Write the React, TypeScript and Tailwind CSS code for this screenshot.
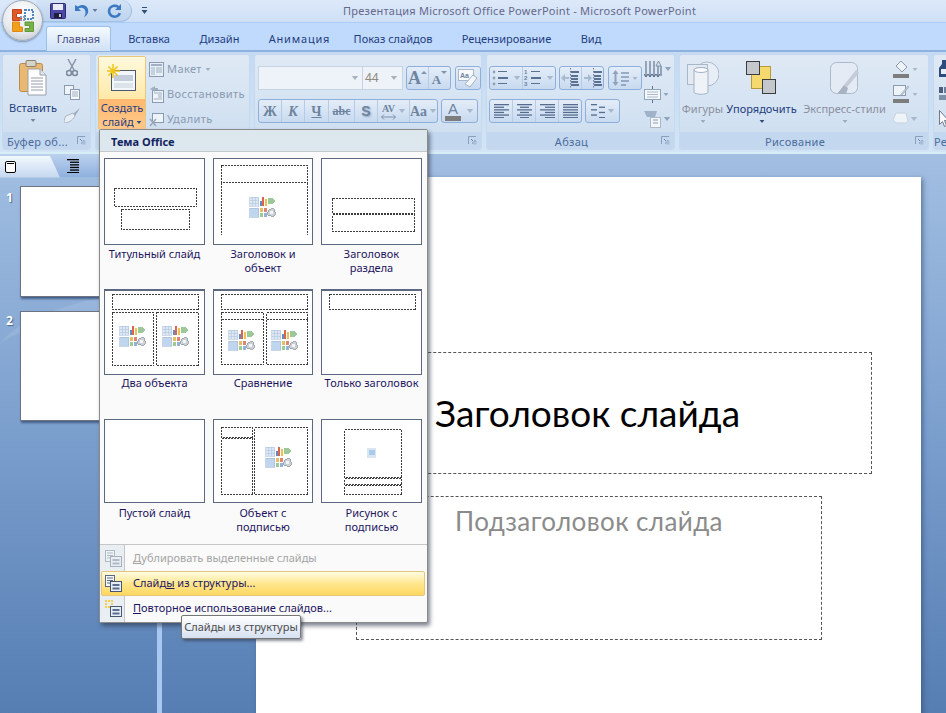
import React from "react";

const Caret = ({ c = "#7f93ad", s = 5 }: { c?: string; s?: number }) => (
  <svg width={s * 2} height={s} viewBox="0 0 10 5" className="shrink-0">
    <path d="M1 0h8L5 5z" fill={c} />
  </svg>
);

const Launcher = () => (
  <svg width="9" height="9" viewBox="0 0 9 9">
    <path d="M0.5 8V0.5H8" fill="none" stroke="#8aa0ba" />
    <path d="M3 3l4 4M7 4v3H4" fill="none" stroke="#6a87ab" />
    <rect x="5" y="5" width="3.5" height="3.5" fill="#a8bdd6" />
  </svg>
);

function Group({ w, label, launcher = true, pr = "pr-[18px]", children }: { w: string; label: string; launcher?: boolean; pr?: string; children: React.ReactNode }) {
  return (
    <div className={`${w} h-[96px] shrink-0 flex flex-col rounded-[3px] border border-[#c6d9ee] overflow-hidden`}>
      <div className="flex-1 min-h-0 flex bg-gradient-to-b from-[#dfe9f5] to-[#d0e0f1]">{children}</div>
      <div className={`h-[17px] shrink-0 bg-[#c3d8ef] flex items-center justify-center relative pt-[1px] ${pr} text-[11px] leading-none text-[#4b6b9c] tracking-[0.3px]`}>
        {label}
        {launcher && (
          <span className="absolute right-[4px] top-[4px] flex">
            <Launcher />
          </span>
        )}
      </div>
    </div>
  );
}

function BtnGroup({ children, className = "" }: { children: React.ReactNode; className?: string }) {
  return (
    <div className={`flex h-[24px] rounded-[3px] border border-[#8eaedb] bg-gradient-to-b from-[#e4edf8] to-[#c8daf0] divide-x divide-[#b5cbe6] overflow-hidden ${className}`}>
      {children}
    </div>
  );
}

const Cell = ({ w, children }: { w: string; children?: React.ReactNode }) => (
  <div className={`${w} h-full flex items-center justify-center gap-[2px] font-['Liberation_Serif',serif] font-bold text-[#6e849f]`}>{children}</div>
);

function Lines({ rows, w = 15, c = "#566d8f" }: { rows: [number, number][]; w?: number; c?: string }) {
  return (
    <svg width={w} height="14" viewBox={`0 0 ${w} 14`}>
      {rows.map(([x, l], i) => (
        <rect key={i} x={x} y={i * 2.6} width={l} height="1.3" fill={c} />
      ))}
    </svg>
  );
}

const ListIcon = ({ num = false }: { num?: boolean }) => (
  <svg width="20" height="18" viewBox="0 0 20 18">
    {[2, 8, 14].map((y, i) =>
      num ? (
        <text key={y} x="0" y={y + 3} fontSize="6" fill="#6c829e" fontFamily="Liberation Sans">
          {i + 1}
        </text>
      ) : (
        <circle key={y} cx="3" cy={y + 1} r="1.4" fill="#8ea2b9" />
      )
    )}
    {[2, 8, 14].map((y, i) => (
      <rect key={y} x="7" y={y} width={i === 1 ? 10 : 9} height={i === 1 ? 2 : 1} fill="#5a7193" />
    ))}
  </svg>
);

const IndentIcon = ({ flip = false }: { flip?: boolean }) => (
  <svg width="20" height="20" viewBox="0 0 20 20">
    <path d="M10.5 0v20" stroke="#6d7f98" strokeDasharray="1.5 1.5" />
    <path d={flip ? "M1 9h4V6l4 4-4 4v-3H1z" : "M9 9H5V6l-4 4 4 4v-3h4z"} fill="#a7bad0" />
    {[3, 7, 10, 13, 16].map((y, i) => (
      <rect key={y} x="11" y={y} width={i === 0 || i === 4 ? 8 : 7} height="2" fill="#5a7193" />
    ))}
  </svg>
);

const MiniContent = ({ cx, cy }: { cx: number; cy: number }) => (
  <g transform={`translate(${cx - 13.5} ${cy - 10})`} shapeRendering="crispEdges" opacity="0.85">
    <rect x="0" y="0" width="9" height="9" fill="#d6e3f2" stroke="#9db7d6" strokeWidth="0.6" />
    <path d="M0 3h9M0 6h9M3 0v9M6 0v9" stroke="#9db7d6" strokeWidth="0.5" />
    <rect x="10" y="4" width="2.4" height="5" fill="#4b78b8" />
    <rect x="12.5" y="0" width="2.4" height="9" fill="#d94a2a" />
    <rect x="15" y="2" width="2.4" height="7" fill="#e8b63a" />
    <path d="M18 1h5l3 3-3 3h-5z" fill="#8dbf88" />
    <rect x="0" y="11" width="9" height="9" fill="#b5d0ec" stroke="#93aecb" strokeWidth="0.6" />
    <rect x="10" y="11" width="3.5" height="4" fill="#e0b64a" />
    <rect x="14" y="11" width="3.5" height="4" fill="#d7705a" />
    <rect x="10" y="16" width="3.5" height="4" fill="#8fc27f" />
    <rect x="14" y="16" width="3.5" height="4" fill="#7fa6d2" />
    <circle cx="22" cy="15.5" r="4" fill="#c3c9d0" stroke="#7f8791" strokeWidth="0.8" />
    <circle cx="22" cy="15.5" r="1.4" fill="#f1f3f5" />
  </g>
);

type R = [number, number, number, number];
function Thumb({ w, h, rects = [], open, icons = [], pic = false, top = false }: { w: number; h: number; rects?: R[]; open?: string; icons?: [number, number][]; pic?: boolean; top?: boolean }) {
  return (
    <svg width={w} height={h} viewBox={`0 0 ${w} ${h}`} className="block">
      <rect x="0.5" y="0.5" width={w - 1} height={h - 1} fill="#fff" stroke="#5b6880" shapeRendering="crispEdges" />
      {top && <rect x="0" y="0" width={w} height="2" fill="#5b6880" />}
      {rects.map(([x, y, rw, rh], i) => (
        <rect key={i} x={x + 0.5} y={y + 0.5} width={rw} height={rh} fill="none" stroke="#3c3c3c" strokeDasharray="2 1" shapeRendering="crispEdges" />
      ))}
      {open && <path d={open} fill="none" stroke="#3c3c3c" strokeDasharray="2 1" shapeRendering="crispEdges" />}
      {icons.map(([x, y], i) => (
        <MiniContent key={i} cx={x} cy={y} />
      ))}
      {pic && (
        <g shapeRendering="crispEdges">
          <rect x="46" y="29" width="9" height="10" fill="#dbe4ef" />
          <rect x="47.5" y="31" width="6" height="5" fill="#a8cdec" />
        </g>
      )}
    </svg>
  );
}

function Layout({ label, mt = "mt-[2px]", ...rest }: { label: React.ReactNode; mt?: string; w: number; h: number; rects?: R[]; open?: string; icons?: [number, number][]; pic?: boolean; top?: boolean }) {
  return (
    <div className="flex flex-col">
      <Thumb {...rest} />
      <div className={`${mt} text-center text-[11px] leading-[14px] text-[#1d1560] whitespace-nowrap`}>{label}</div>
    </div>
  );
}

const MenuIcon = ({ kind, dim = false }: { kind: "dup" | "outline" | "reuse"; dim?: boolean }) => (
  <svg width="17" height="17" viewBox="0 0 17 17" className={dim ? "opacity-40" : ""}>
    {kind === "reuse" ? (
      <g fill="#f3cf4e">
        <rect x="0" y="0" width="2" height="2" />
        <rect x="3" y="0" width="2" height="2" />
        <rect x="6" y="0" width="2" height="2" />
        <rect x="0" y="3" width="2" height="2" />
        <rect x="6" y="3" width="2" height="2" />
        <rect x="0" y="6" width="2" height="2" />
        <rect x="3" y="6" width="2" height="2" />
      </g>
    ) : (
      <g>
        <rect x="0.5" y="0.5" width="9" height="11" fill="#f5f8fb" stroke="#5a6a84" />
        <path d="M2 3h6M2 5.5h6M2 8h6" stroke="#5a6a84" />
      </g>
    )}
    <rect x="5.5" y="6.5" width="11" height="10" fill="#e8eef5" stroke="#46566f" />
    <rect x="7.5" y="9" width="7" height="2" fill="#5b6f8e" />
    <rect x="7.5" y="12.5" width="7" height="2" fill="#5b6f8e" />
  </svg>
);

function MenuRow({ icon, children, hover = false, dim = false }: { icon: React.ReactNode; children: React.ReactNode; hover?: boolean; dim?: boolean }) {
  return (
    <div
      className={`h-[25px] ml-[1px] mr-[2px] flex items-center text-[11px] ${hover ? "rounded-[2px] border border-[#e5c67e] bg-gradient-to-b from-[#fffbe0] via-[#ffe78e] to-[#ffd75f]" : "border border-transparent"} ${dim ? "text-[#a4a4a4]" : "text-[#1d1560]"}`}
    >
      <div className="w-[23px] h-full flex items-center justify-center shrink-0">{icon}</div>
      <div className="pl-[8px] whitespace-nowrap">{children}</div>
    </div>
  );
}

const tabs: [string, string][] = [
  ["Вставка", "w-[76px]"],
  ["Дизайн", "w-[65px]"],
  ["Анимация", "w-[95px] tracking-[0.8px]"],
  ["Показ слайдов", "w-[92px]"],
  ["Рецензирование", "w-[135px]"],
  ["Вид", "w-[34px]"],
];

export default function App() {
  return (
    <div className="relative w-[946px] h-[713px] overflow-hidden flex flex-col font-['Noto_Sans',sans-serif] bg-[#9fbde2]">
      {/* title bar */}
      <div className="h-[23px] shrink-0 relative flex items-center bg-gradient-to-b from-[#dce9f9] to-[#cfe0f6] border-b border-[#a9cdf6]">
        <div className="ml-[36px] w-[96px] h-[22px] rounded-r-[14px] bg-gradient-to-b from-[#d4e3f6] to-[#bdd3ee] border-r border-b border-[#a5c1e2] flex items-center">
          <svg width="16" height="16" viewBox="0 0 16 16" className="ml-[14px]">
            <rect x="0.5" y="0.5" width="15" height="15" rx="1" fill="#4c47a8" stroke="#2d2a6e" />
            <rect x="3" y="1" width="10" height="6" fill="#e8ecf5" />
            <rect x="4" y="10" width="8" height="5" fill="#1e1e3c" />
            <rect x="9" y="11" width="2" height="3" fill="#c8c8d8" />
          </svg>
          <svg width="15" height="15" viewBox="0 0 15 15" className="ml-[8px]">
            <path d="M1 2v6h6L4.6 5.6C7 4 11 5 11.5 9c.2 2-.6 3.6-1.6 5 3.4-1.2 5-4.6 4-8C12.8 1.8 7.8 0.6 3.6 3.6z" fill="#3b79c2" />
          </svg>
          <span className="ml-[3px] mr-[6px] flex">
            <Caret c="#5d7ba3" s={3} />
          </span>
          <svg width="15" height="15" viewBox="0 0 15 15" className="ml-[3px]">
            <path d="M14 1v6H8l2.3-2.3C8 3.400 4 4 3.400 7.400 3 10 5 12.400 7.500 12.400c2 0 3.500-1.100 4-2.700l2.600.9C13.200 13.200 10.700 15 7.500 15 3.300 15 .5 11.500.8 7.500 1.300 2.300 7.700-.4 12 3z" fill="#3b79c2" />
          </svg>
        </div>
        <svg width="7" height="9" viewBox="0 0 7 9" className="ml-[9px]">
          <rect x="1" y="0" width="5" height="1" fill="#33507a" />
          <path d="M0.500 3h6L3.500 7z" fill="#33507a" />
        </svg>
        <div className="absolute left-[343px] top-[3px] text-[11px] leading-[16px] text-[#66688c] whitespace-nowrap tracking-[0.25px]">
          Презентация Microsoft Office PowerPoint - Microsoft PowerPoint
        </div>
      </div>

      {/* tab row */}
      <div className="h-[29px] shrink-0 flex items-end pl-[46px] bg-[#bfdafc] border-b-2 border-[#8eb1de] text-[11px] text-[#1f3d80]">
        <div className="w-[65px] h-[25px] -mb-[1px] pt-[1px] rounded-t-[3px] border border-b-0 border-[#9cc0e6] bg-gradient-to-b from-[#f5faff] to-[#cfe1f5] flex items-center justify-center text-[#4a4f86] relative">
          Главная
        </div>
        {tabs.map(([t, w]) => (
          <div key={t} className={`${w} h-[23px] pt-[1px] flex items-center justify-center`}>
            {t}
          </div>
        ))}
      </div>

      {/* ribbon */}
      <div className="h-[102px] shrink-0 flex gap-[4px] pl-[2px] pt-[2px] bg-gradient-to-b from-[#c4daf3] to-[#d2e5f6] border-b-2 border-[#d7edf6] overflow-hidden">
        <Group w="w-[89px]" label="Буфер об...">
          <div className="w-[60px] flex flex-col items-center pt-[5px] text-[11px] text-[#1f3d80]">
            <svg width="28" height="36" viewBox="0 0 28 36">
              <rect x="0.500" y="3.500" width="23" height="28" rx="2" fill="#e9b873" stroke="#b98c4e" />
              <rect x="7" y="0.500" width="10" height="6" rx="1" fill="#d6d3c8" stroke="#8a8270" />
              <path d="M9 9h12l6 6v20H9z" fill="#fdfdfd" stroke="#98a0aa" />
              <path d="M21 9v6h6" fill="#dfe5ec" stroke="#98a0aa" />
              <path d="M12 18h12M12 21h12M12 24h12M12 27h12M12 30h12" stroke="#98a0aa" />
            </svg>
            <div className="mt-[5px] leading-[14px]">Вставить</div>
            <div className="mt-[4px]">
              <Caret c="#6f87a8" s={3} />
            </div>
          </div>
          <div className="flex flex-col items-center gap-[8px] pt-[4px] pl-[1px]">
            <svg width="12" height="18" viewBox="0 0 12 18">
              <path d="M2 0l6 11M10 0L4 11" stroke="#8895a6" strokeWidth="1.500" />
              <circle cx="3" cy="14" r="2.500" fill="none" stroke="#7d8a9c" strokeWidth="1.600" />
              <circle cx="9" cy="14" r="2.500" fill="none" stroke="#7d8a9c" strokeWidth="1.600" />
            </svg>
            <svg width="16" height="15" viewBox="0 0 16 15">
              <rect x="0.500" y="0.500" width="9" height="9" fill="#eef3f8" stroke="#8b9ab0" />
              <rect x="6.500" y="4.500" width="9" height="10" fill="#f5f8fb" stroke="#8b9ab0" />
              <path d="M8 7h6M8 9h6M8 11h6" stroke="#a0afc2" />
            </svg>
            <svg width="16" height="15" viewBox="0 0 16 15">
              <path d="M16 0l-7 6 2 2z" fill="#9aa9bb" />
              <path d="M9 5L2 8c-1 1-2 4-2 7 4 0 8-2 11-7z" fill="#e8eef4" stroke="#a8b6c6" />
            </svg>
          </div>
        </Group>

        <Group w="w-[155px]" label="" launcher={false}>
          <div className="w-[48px] ml-[2px] mt-[1px] h-[74px] flex flex-col rounded-[2px] border border-[#e6c878] text-[11px] leading-[14px] text-[#1f3d80] text-center">
            <div className="h-[42px] bg-gradient-to-b from-[#fff9dc] to-[#ffe9a8] relative flex items-center justify-center">
              <svg width="30" height="28" viewBox="0 0 30 28">
                <rect x="4.500" y="6.500" width="24" height="20" fill="#f3f6fa" stroke="#4d5b70" />
                <rect x="7" y="11" width="19" height="6" fill="#c3cddb" />
                <rect x="7" y="19" width="19" height="5" fill="#dde3eb" />
                <g stroke="#f0c419" strokeWidth="1.500">
                  <path d="M6 0v14M0 7h13M1.500 2.500l9 9M10.500 2.500l-9 9" />
                </g>
              </svg>
            </div>
            <div className="flex-1 bg-gradient-to-b from-[#ffb870] to-[#ffc98a]">
              <div className="leading-[14px] mt-[2px]">Создать</div>
              <div className="flex items-center justify-center gap-[2px] leading-[14px]">
                слайд <Caret c="#33507a" s={3} />
              </div>
            </div>
          </div>
          <div className="flex flex-col pl-[3px] pt-[5px] gap-[7px] text-[11px] leading-[18px] text-[#8a9ab0] tracking-[0.4px]">
            <div className="flex items-center gap-[3px]">
              <svg width="15" height="15" viewBox="0 0 15 15">
                <rect x="0.500" y="0.500" width="14" height="14" fill="#e8eef5" stroke="#8a9ab0" />
                <rect x="2" y="2" width="11" height="2" fill="#9fb0c4" />
                <rect x="2" y="5" width="4" height="8" fill="#c4d1df" />
                <path d="M7 6h6M7 8h6M7 10h6" stroke="#9fb0c4" />
              </svg>
              <span>Макет</span>
              <Caret c="#a0aec0" s={3} />
            </div>
            <div className="flex items-center gap-[3px]">
              <svg width="15" height="17" viewBox="0 0 15 17">
                <rect x="3.500" y="4.500" width="11" height="12" fill="#eef3f8" stroke="#8a9ab0" />
                <path d="M5 7h8M9 9h4M9 11h4M5 13h8" stroke="#9fb0c4" />
                <path d="M6 0L1 3l5 3V4h3V2H6z" fill="#9fb0c4" />
              </svg>
              <span>Восстановить</span>
            </div>
            <div className="flex items-center gap-[3px]">
              <svg width="15" height="15" viewBox="0 0 15 15">
                <rect x="3.500" y="1.500" width="11" height="9" fill="#eef3f8" stroke="#8a9ab0" />
                <path d="M1 7l6 7M7 7l-6 7" stroke="#98a6b8" strokeWidth="1.500" />
              </svg>
              <span>Удалить</span>
            </div>
          </div>
        </Group>

        <Group w="w-[228px]" label="">
          <div className="flex flex-col pl-[3px] pt-[11px] gap-[9px]">
            <div className="flex gap-[3px]">
              <div className="flex h-[24px] bg-[#eef3f9] border border-[#c6d3e3] text-[12px] text-[#8e8a7c]">
                <div className="w-[104px] flex items-center justify-end pr-[3px] border-r border-[#c6d3e3]">
                  <Caret c="#a8b2bf" s={4} />
                </div>
                <div className="w-[39px] flex items-center justify-between pl-[2px] pr-[4px]">
                  44 <Caret c="#a8b2bf" s={4} />
                </div>
              </div>
              <BtnGroup>
                <Cell w="w-[22px]">
                  <span className="text-[18px] leading-none">A</span>
                  <span className="-mt-[12px] -ml-[2px] flex">
                    <svg width="6" height="3" viewBox="0 0 6 3"><path d="M3 0l3 3H0z" fill="#7f93ad" /></svg>
                  </span>
                </Cell>
                <Cell w="w-[21px]">
                  <span className="text-[13px] leading-none mt-[2px]">A</span>
                  <span className="-mt-[12px] -ml-[2px] flex">
                    <svg width="6" height="3" viewBox="0 0 6 3"><path d="M0 0h6L3 3z" fill="#7f93ad" /></svg>
                  </span>
                </Cell>
              </BtnGroup>
              <BtnGroup className="ml-[1px]">
                <div className="w-[24px] flex items-center justify-center">
                  <svg width="20" height="19" viewBox="0 0 20 19">
                    <rect x="0.500" y="0.500" width="15" height="11" fill="#f7f9fc" stroke="#a9b8cb" />
                    <text x="2" y="9" fontSize="7" fontWeight="bold" fill="#6e849f" fontFamily="Liberation Sans">
                      Aa
                    </text>
                    <path d="M15 6l4 3-7 9-5-3z" fill="#f3f6fa" stroke="#a3b2c6" />
                  </svg>
                </div>
              </BtnGroup>
            </div>
            <div className="flex gap-[3px]">
              <BtnGroup>
                <Cell w="w-[23px]">
                  <span className="text-[14px]">Ж</span>
                </Cell>
                <Cell w="w-[23px]">
                  <span className="text-[14px] italic">К</span>
                </Cell>
                <Cell w="w-[24px]">
                  <span className="text-[14px] underline">Ч</span>
                </Cell>
                <Cell w="w-[26px]">
                  <span className="text-[12px] line-through">abc</span>
                </Cell>
                <Cell w="w-[23px]">
                  <span className="text-[14px] font-['Liberation_Sans',sans-serif] [text-shadow:1px_1px_2px_#8fa3bb]">S</span>
                </Cell>
                <Cell w="w-[32px]">
                  <span className="flex flex-col items-center text-[10px] leading-[11px]">
                    AV
                    <svg width="15" height="6" viewBox="0 0 15 6">
                      <path d="M0.500 3h14M3 0.500L0.500 3 3 5.500M12 0.500L14.500 3 12 5.500" fill="none" stroke="#7f93ad" />
                    </svg>
                  </span>
                  <Caret c="#a8b8cc" s={4} />
                </Cell>
                <Cell w="w-[27px]">
                  <span className="text-[14px]">Aa</span>
                  <Caret c="#a8b8cc" s={4} />
                </Cell>
              </BtnGroup>
              <BtnGroup>
                <div className="w-[35px] flex items-center justify-center gap-[5px]">
                  <span className="flex flex-col items-center font-['Liberation_Sans',sans-serif] text-[#6e849f] text-[15px] leading-[15px]">
                    A
                    <span className="w-[16px] h-[5px] bg-[#7d7d7d]" />
                  </span>
                  <Caret c="#a8b8cc" s={4} />
                </div>
              </BtnGroup>
            </div>
          </div>
        </Group>

        <Group w="w-[189px]" label="Абзац">
          <div className="flex flex-col pl-[2px] pt-[11px] gap-[9px] w-[155px] shrink-0">
            <div className="flex gap-[3px]">
              <BtnGroup>
                <Cell w="w-[33px]">
                  <ListIcon />
                  <Caret c="#a8b8cc" s={4} />
                </Cell>
                <Cell w="w-[33px]">
                  <ListIcon num />
                  <Caret c="#a8b8cc" s={4} />
                </Cell>
              </BtnGroup>
              <BtnGroup>
                <Cell w="w-[22px]">
                  <IndentIcon />
                </Cell>
                <Cell w="w-[22px]">
                  <IndentIcon flip />
                </Cell>
              </BtnGroup>
              <BtnGroup className="ml-[1px]">
                <Cell w="w-[32px]">
                  <svg width="18" height="18" viewBox="0 0 18 18">
                    <path d="M3.500 1l3 4h-2v8h2l-3 4-3-4h2V5h-2z" fill="#8fa3bb" />
                    <path d="M9 4h8M9 8h8M9 12h8M9 16h5" stroke="#5a7193" strokeWidth="1.200" />
                  </svg>
                  <Caret c="#a8b8cc" s={3} />
                </Cell>
              </BtnGroup>
            </div>
            <div className="flex gap-[3px]">
              <BtnGroup>
                <Cell w="w-[23px]">
                  <Lines rows={[[0, 15], [0, 10], [0, 15], [0, 10], [0, 15], [0, 10]]} />
                </Cell>
                <Cell w="w-[23px]">
                  <Lines rows={[[0, 15], [3, 9], [0, 15], [3, 9], [0, 15], [3, 9]]} />
                </Cell>
                <Cell w="w-[23px]">
                  <Lines rows={[[0, 15], [5, 10], [0, 15], [5, 10], [0, 15], [5, 10]]} />
                </Cell>
                <Cell w="w-[22px]">
                  <Lines rows={[[0, 15], [0, 15], [0, 15], [0, 15], [0, 15], [0, 15]]} />
                </Cell>
              </BtnGroup>
              <BtnGroup>
                <Cell w="w-[33px]">
                  <Lines rows={[[0, 6], [8, 6], [0, 6], [8, 6], [0, 6], [8, 6]]} w={14} />
                  <Caret c="#a8b8cc" s={4} />
                </Cell>
              </BtnGroup>
            </div>
          </div>
          <div className="flex flex-col gap-[7px] pt-[5px] pl-[2px]">
            <div className="flex items-center gap-[2px] h-[18px]">
              <svg width="18" height="17" viewBox="0 0 18 17">
                <path d="M2 0v15M6 0v15M10 0v15M14 5v10M17 5v10" stroke="#4a5f7d" />
                <path d="M0 13l2 3 2-3M4 13l2 3 2-3M8 13l2 3 2-3M12 13l2 3 2-3" fill="none" stroke="#4a5f7d" />
                <path d="M12 5l2.500-5 2.500 5z" fill="none" stroke="#7d90a8" />
              </svg>
              <Caret c="#8ea3bd" s={4} />
            </div>
            <div className="flex items-center gap-[2px] h-[18px]">
              <svg width="17" height="17" viewBox="0 0 17 17">
                <rect x="0.500" y="3.500" width="16" height="10" fill="#f6f8fb" stroke="#8fa3bb" />
                <path d="M3 6h11M3 8.500h11M3 11h11" stroke="#a9b8cb" />
                <path d="M8.500 0v3M8.500 14v3" stroke="#5a7193" />
              </svg>
              <Caret c="#8ea3bd" s={3} />
            </div>
            <div className="flex items-center gap-[2px] h-[18px]">
              <svg width="17" height="17" viewBox="0 0 17 17">
                <path d="M0 0h13l-2 6H3z" fill="#9fb2c8" />
                <rect x="6.500" y="6.500" width="10" height="10" fill="#f4f7fa" stroke="#a9b8cb" />
                <path d="M9 9h5M9 12h5" stroke="#8a9ab0" />
              </svg>
              <Caret c="#8ea3bd" s={4} />
            </div>
          </div>
        </Group>

        <Group w="w-[250px]" label="Рисование">
          <div className="flex text-[11px] leading-[14px] pt-[6px]">
            <div className="w-[45px] flex flex-col items-center text-[#8b8f9f]">
              <svg width="32" height="34" viewBox="0 0 32 34">
                <circle cx="20" cy="13" r="12" fill="#e7eef6" stroke="#a8b8cb" />
                <rect x="0.500" y="3.500" width="20" height="20" fill="#e3eaf3" stroke="#a8b8cb" />
                <path d="M7 9c0-3 14-3 14 0v22c0 3-14 3-14 0z" fill="#eff3f8" stroke="#a3b3c7" />
                <ellipse cx="14" cy="9" rx="7" ry="2.500" fill="#f8fafc" stroke="#a3b3c7" />
              </svg>
              <div className="mt-[7px] whitespace-nowrap">Фигуры</div>
              <div className="mt-[4px]">
                <Caret c="#9aacc2" s={3} />
              </div>
            </div>
            <div className="w-[73px] flex flex-col items-center text-[#1f3d80]">
              <svg width="32" height="34" viewBox="0 0 32 34">
                <rect x="5.500" y="5.500" width="19" height="22" fill="#f5d96e" stroke="#b79a3e" />
                <rect x="0.500" y="0.500" width="13" height="13" fill="#c4c8cc" stroke="#3c3c3c" />
                <rect x="16.500" y="18.500" width="13" height="14" fill="#c4c8cc" stroke="#3c3c3c" />
              </svg>
              <div className="mt-[7px] whitespace-nowrap">Упорядочить</div>
              <div className="mt-[4px]">
                <Caret c="#33507a" s={3} />
              </div>
            </div>
            <div className="w-[83px] flex flex-col items-center text-[#8b8f9f] ml-[5px]">
              <svg width="32" height="34" viewBox="0 0 32 34">
                <rect x="1.500" y="1.500" width="27" height="31" rx="6" fill="#e4ebf4" stroke="#a9bacd" />
                <path d="M30 12L18 26l-3-2L27 9z" fill="#c3ccd8" />
                <path d="M15 24l-7 9h9l2-6z" fill="#a7b3c2" />
              </svg>
              <div className="mt-[7px] whitespace-nowrap">Экспресс-стили</div>
              <div className="mt-[4px]">
                <Caret c="#9aacc2" s={3} />
              </div>
            </div>
            <div className="flex flex-col gap-[7px] pl-[7px] -mt-[1px]">
              <div className="flex items-center gap-[3px] h-[18px]">
                <svg width="16" height="18" viewBox="0 0 16 18">
                  <path d="M8 1l6 6-5 5-6-6z" fill="#eef3f8" stroke="#8a9ab0" />
                  <rect x="0" y="14" width="16" height="4" fill="#7d7d7d" />
                </svg>
                <Caret c="#a8b8cc" s={3} />
              </div>
              <div className="flex items-center gap-[3px] h-[18px]">
                <svg width="16" height="18" viewBox="0 0 16 18">
                  <rect x="0.500" y="0.500" width="12" height="10" fill="#eef3f8" stroke="#8a9ab0" />
                  <path d="M15 1L8 9l-1 2 2-1 7-8z" fill="#c3ccd8" stroke="#8a9ab0" strokeWidth="0.500" />
                  <rect x="0" y="14" width="16" height="4" fill="#7d7d7d" />
                </svg>
                <Caret c="#a8b8cc" s={3} />
              </div>
              <div className="flex items-center gap-[1px] h-[18px]">
                <svg width="16" height="16" viewBox="0 0 16 16">
                  <path d="M3 2h10l2 8-2 2H3L0 9z" fill="#eef3f8" stroke="#c5d1df" />
                </svg>
                <Caret c="#a8b8cc" s={4} />
              </div>
            </div>
          </div>
        </Group>

        <Group w="w-[15px]" label="Ре" launcher={false} pr="pr-0">
          <div className="flex flex-col gap-[7px] pt-[5px] pl-[5px]">
            <svg width="10" height="18" viewBox="0 0 10 18">
              <path d="M3 0h4v4l3 4v9H0V8l3-4z" fill="#2d4a7d" />
              <rect x="2" y="9" width="6" height="5" fill="#e8eef5" />
            </svg>
            <svg width="10" height="18" viewBox="0 0 10 18">
              <rect x="0" y="2" width="4" height="6" fill="#4a5f7d" />
              <rect x="5" y="2" width="5" height="6" fill="#6d7f98" />
              <rect x="0" y="10" width="10" height="5" fill="#7d90a8" />
            </svg>
            <svg width="10" height="18" viewBox="0 0 10 18">
              <path d="M0.500 0.500v14l3-3 2 5 2-1-2-5h4z" fill="#f8fafc" stroke="#6c7a8c" />
            </svg>
          </div>
        </Group>
      </div>

      {/* workspace */}
      <div className="flex-1 min-h-0 flex bg-gradient-to-b from-[#a2bfe2] via-[#7b9fcd] to-[#567eb3]">
        <div className="w-[157px] shrink-0 flex flex-col relative">
          <svg width="157" height="559" viewBox="0 0 157 559" className="absolute left-0 top-0">
            <path d="M0 190C15 170 40 155 157 130V150C70 165 25 170 0 190z" fill="#ffffff" opacity="0.1" />
          </svg>
          <div className="h-[23px] shrink-0 flex items-center relative bg-gradient-to-b from-[#bcd2ee] to-[#8fb0de]">
            <div className="w-[60px] h-[22px] mt-[2px] bg-gradient-to-b from-[#f3f8fe] to-[#c3d7f0] [clip-path:polygon(0_0,83%_0,100%_100%,0_100%)] flex items-center pl-[5px]">
              <span className="w-[11px] h-[12px] block rounded-[2px] border border-black bg-white relative">
                <span className="absolute left-[1px] right-[1px] top-[1px] h-[1px] bg-black" />
              </span>
            </div>
            <div className="ml-[7px]">
              <Lines rows={[[0, 12], [3, 9], [3, 9], [3, 9], [3, 9], [0, 12]]} w={12} c="#000000" />
            </div>
          </div>
          <div className="flex pt-[9px] relative">
            <div className="w-[20px] shrink-0 pl-[6px] pt-[5px] flex flex-col gap-[109px] text-[12px] leading-[14px] font-bold text-white [text-shadow:1px_1px_1px_#4d6a92]">
              <span>1</span>
              <span>2</span>
            </div>
            <div className="flex flex-col gap-[14px]">
              <div className="w-[130px] h-[111px] bg-white border border-[#6d7480] shadow-[1px_2px_2px_#44608a]" />
              <div className="w-[130px] h-[110px] bg-white border border-[#6d7480] shadow-[1px_2px_2px_#44608a]" />
            </div>
          </div>
        </div>
        <div className="w-[5px] shrink-0 bg-[#a8c8f2]" />
        <div className="flex-1 pl-[94px] pt-[23px]">
          <div className="w-[665px] h-[600px] bg-white shadow-[2px_2px_5px_rgba(50,70,110,0.6)] flex flex-col font-['Lato',sans-serif]">
            <div className="ml-[47px] mt-[175px] w-[569px] h-[122px] border border-dashed border-[#555] flex items-center justify-center text-[37px] text-black">
              Заголовок слайда
            </div>
            <div className="ml-[100px] mt-[22px] w-[466px] h-[144px] border border-dashed border-[#555] flex justify-center pt-[5px] text-[26px] leading-[38px] text-[#8b8b8b] tracking-[0.4px]">
              Подзаголовок слайда
            </div>
          </div>
        </div>
      </div>

      {/* office button */}
      <div className="absolute left-[2px] top-0 w-[41px] h-[41px] rounded-full border border-[#9fa9b5] bg-[radial-gradient(circle_at_50%_30%,#ffffff,#e6e9ed_60%,#b4bbc4)] shadow-[0_1px_2px_#7890ad] flex items-center justify-center">
        <svg width="24" height="25" viewBox="0 0 24 25">
          <path d="M1.500 1.500h9v4H5.500v4h5v3h-9z" fill="#dd5a26" stroke="#c9401f" strokeWidth="1" />
          <path d="M14 2h8v9h-8z" fill="none" stroke="#4f87c5" strokeWidth="2" strokeDasharray="2 1" />
          <path d="M1.500 14h7v5h3v4.500h-10z" fill="#f1a01e" stroke="#e08a15" strokeWidth="1" />
          <path d="M14 14h8.500v9.500H14v-3h4.500v-3H14z" fill="#79b24a" stroke="#5f9a3a" strokeWidth="1" />
          <g fill="#8a9fb8">
            <rect x="9" y="8" width="2" height="2" />
            <rect x="12" y="8" width="2" height="2" />
            <rect x="9" y="11" width="2" height="2" />
            <rect x="12" y="11" width="2" height="2" />
          </g>
        </svg>
      </div>

      {/* dropdown */}
      <div className="absolute left-[99px] top-[129px] w-[329px] h-[494px] flex flex-col bg-[#fafafa] border border-[#8a8a8a] rounded-[2px] shadow-[2px_3px_4px_rgba(40,50,70,0.6)]">
        <div className="h-[22px] shrink-0 bg-[#dde7ee] border-b border-[#c4c8cc] pl-[11px] pt-[3px] flex items-center text-[11px] font-bold text-[#10245f]">Тема Office</div>
        <div className="h-[392px] shrink-0 grid grid-cols-[101px_100px_101px] grid-rows-[131px_130px_auto] gap-x-[8px] pl-[4px] pt-[6px]">
          <Layout w={101} h={87} label="Титульный слайд" rects={[[10, 30, 82, 18], [17, 51, 68, 20]]} />
          <Layout w={100} h={87} label={<>Заголовок и<br />объект</>} rects={[[8, 7, 86, 17]]} open="M8.500 24.500V77M94.500 24.500V77" icons={[[50, 49]]} />
          <Layout w={101} h={87} label={<>Заголовок<br />раздела</>} rects={[[11, 40, 82, 15], [11, 56, 82, 17]]} />
          <Layout w={101} h={86} top mt="mt-[1px]" label="Два объекта" rects={[[8, 5, 86, 15], [8, 23, 41, 53], [52, 23, 42, 53]]} icons={[[29, 47], [72, 47]]} />
          <Layout w={100} h={86} top mt="mt-[1px]" label="Сравнение" rects={[[8, 5, 86, 15], [8, 23, 42, 52], [53, 23, 41, 52]]} open="M8.500 30.500H50.500M53.500 30.500H94.500" icons={[[29, 51], [72, 51]]} />
          <Layout w={101} h={86} top mt="mt-[1px]" label="Только заголовок" rects={[[8, 5, 86, 15]]} />
          <Layout w={101} h={84} mt="mt-[3px]" label="Пустой слайд" />
          <Layout w={100} h={84} mt="mt-[3px]" label={<>Объект с<br />подписью</>} rects={[[8, 8, 31, 10], [8, 19, 31, 56], [41, 8, 53, 67]]} icons={[[66, 38]]} />
          <Layout w={101} h={84} mt="mt-[3px]" label={<>Рисунок с<br />подписью</>} rects={[[23, 10, 57, 48], [23, 59, 57, 6], [23, 66, 57, 9]]} pic />
        </div>
        <div className="flex-1 relative border-t border-[#c6c6c6] flex flex-col">
          <div className="absolute left-0 top-0 bottom-0 w-[25px] bg-[#e9eef2] border-r border-[#c6c6c6]" />
          <div className="relative flex flex-col pt-[1px]">
            <MenuRow dim icon={<MenuIcon kind="dup" dim />}>
              <u>Д</u>ублировать выделенные слайды
            </MenuRow>
            <MenuRow hover icon={<MenuIcon kind="outline" />}>
              Слайд<u>ы</u> из структуры...
            </MenuRow>
            <MenuRow icon={<MenuIcon kind="reuse" />}>
              <u>П</u>овторное использование слайдов...
            </MenuRow>
          </div>
        </div>
      </div>

      {/* tooltip */}
      <div className="absolute left-[181px] top-[615px] w-[120px] h-[24px] rounded-[2px] border border-[#767676] bg-gradient-to-b from-white to-[#d6e1f1] shadow-[2px_2px_3px_rgba(40,50,70,0.55)] flex items-center justify-center text-[11px] text-[#4c4c4c] whitespace-nowrap">
        Слайды из структуры
      </div>
    </div>
  );
}
